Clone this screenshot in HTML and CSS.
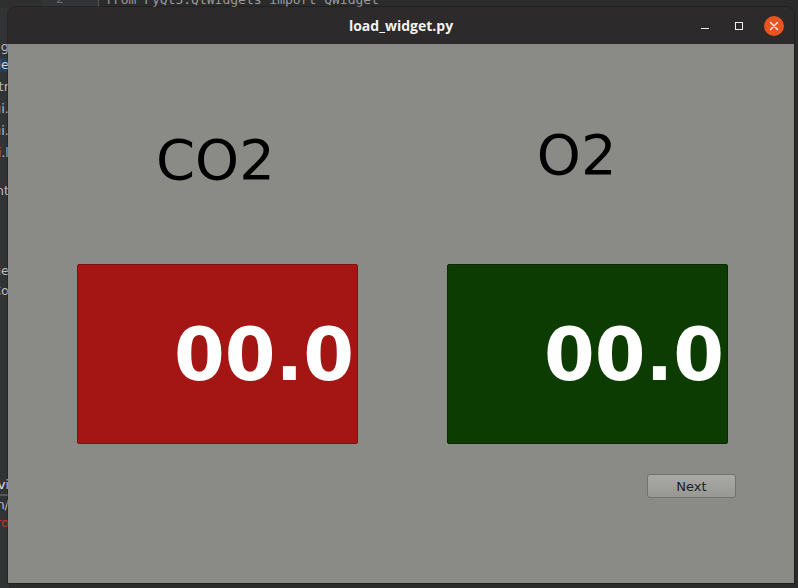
FILE: index.html
```html
<!DOCTYPE html>
<html>
<head>
<meta charset="utf-8">
<link rel="stylesheet" href="styles.css">
</head>
<body>
<div class="desk">
  <div class="codeline">
    <span class="gutter-a"></span>
    <span class="lineno">2</span>
    <span class="code">from PyQt5.QtWidgets import QWidget</span>
  </div>
  <div class="sidepanel">
    <div class="frag f1"><span>Debug</span></div>
    <div class="frag f2 hl"><span>loade</span></div>
    <div class="frag f3"><span>contr</span></div>
    <div class="frag f4"><span>ui.</span></div>
    <div class="frag f5"><span>ui.</span></div>
    <div class="frag f6"><span>ui.l</span></div>
    <div class="frag f7"><span>Paint</span></div>
    <div class="frag f8"><span>Wie</span></div>
    <div class="frag f9"><span>QCo</span></div>
    <div class="frag f10 white"><span>vi</span></div>
    <div class="frag f11"><span>n/</span></div>
    <div class="frag f12 red"><span>rro</span></div>
  </div>

  <div class="window">
    <div class="titlebar">
      <span class="title">load_widget.py</span>
      <div class="controls">
        <span class="ctl-min"></span>
        <span class="ctl-max"></span>
        <span class="ctl-close">
          <svg width="20" height="20" viewBox="0 0 20 20"><path d="M6.5 6.5 L13.5 13.5 M13.5 6.5 L6.5 13.5" stroke="#fff" stroke-width="1.3" stroke-linecap="round"/></svg>
        </span>
      </div>
    </div>
    <div class="content">
      <div class="labels">
        <div class="label label-co2">CO2</div>
        <div class="label label-o2">O2</div>
      </div>
      <div class="boxes">
        <div class="box box-red"><span class="value">00.0</span></div>
        <div class="box box-green"><span class="value">00.0</span></div>
      </div>
      <div class="actions">
        <button class="btn-next">Next</button>
      </div>
    </div>
  </div>
</div>
</body>
</html>
```

FILE: styles.css
```css
html, body {
  margin: 0;
  padding: 0;
}
body {
  width: 798px;
  height: 588px;
  overflow: hidden;
  background: #2b2b2b;
  font-family: "DejaVu Sans", sans-serif;
}
.desk {
  position: relative;
  width: 798px;
  height: 588px;
  background: #2b2b2b;
}
.codeline {
  display: flex;
  height: 8px;
  overflow: hidden;
  background: #2b2b2b;
  font-family: "DejaVu Sans Mono", monospace;
  font-size: 13px;
  color: #8e9092;
}
.gutter-a {
  width: 42px;
  background: #2f2f2f;
}
.lineno {
  width: 57px;
  padding-left: 14px;
  box-sizing: border-box;
  background: #313335;
  line-height: 1;
  margin-top: -8px;
  border-right: 1px solid #555;
  color: #6b6d70;
}
.code {
  padding-left: 6px;
  line-height: 1;
  margin-top: -7px;
  color: #9a9c9e;
  white-space: nowrap;
}
.sidepanel {
  width: 9px;
  height: 580px;
  background: #313335;
  position: relative;
  overflow: hidden;
  font-family: "DejaVu Sans", sans-serif;
  font-size: 13px;
  color: #b9bbbd;
}
.frag {
  display: flex;
  justify-content: flex-end;
  white-space: nowrap;
  height: 14px;
  line-height: 14px;
  overflow: hidden;
  width: 9px;
}
.frag span { flex: none; }
.f1 { margin-top: 32px; }
.f2 { margin-top: 4px; background: #214060; color: #d4d6d8; height: 14px; }
.f3 { margin-top: 8px; }
.f4 { margin-top: 8px; }
.f5 { margin-top: 8px; }
.f6 { margin-top: 8px; }
.f7 { margin-top: 24px; }
.f8 { margin-top: 66px; }
.f9 { margin-top: 6px; }
.f10 { margin-top: 180px; color: #e0e0e0; border-bottom: 2px solid #55585b; height: 16px; }
.f11 { margin-top: 2px; }
.f12 { margin-top: 4px; color: #c0392b; }

.window {
  position: absolute;
  left: 8px;
  top: 7px;
  width: 786px;
  height: 576px;
  display: flex;
  flex-direction: column;
  border-radius: 8px 8px 0 0;
  overflow: hidden;
  box-shadow: 0 0 0 1px rgba(0,0,0,0.25);
}
.titlebar {
  height: 37px;
  flex: none;
  background: #2c2a2a;
  position: relative;
  display: flex;
  align-items: center;
  justify-content: center;
}
.title {
  font-family: "Open Sans", sans-serif;
  font-weight: 700;
  font-size: 14px;
  color: #f2f2f2;
  margin-top: -1px;
}
.controls {
  position: absolute;
  right: 0;
  top: 0;
  height: 37px;
  display: flex;
  align-items: center;
}
.ctl-min {
  width: 8px;
  height: 1.5px;
  background: #f0f0f0;
  margin-top: 6px;
  margin-right: 26px;
}
.ctl-max {
  width: 6px;
  height: 6px;
  border: 1.5px solid #f0f0f0;
  margin-right: 21px;
  margin-top: 1px;
}
.ctl-close {
  width: 20px;
  height: 20px;
  border-radius: 50%;
  background: #e95420;
  margin-right: 10px;
  display: flex;
  margin-top: 1px;
}
.content {
  flex: 1;
  background: #8a8b86;
  display: flex;
  flex-direction: column;
}
.labels {
  display: flex;
  align-items: flex-start;
}
.label {
  font-family: "DejaVu Sans", sans-serif;
  font-size: 56px;
  line-height: 56px;
  color: #000;
}
.label-co2 {
  margin-top: 88px;
  margin-left: 148px;
}
.label-o2 {
  margin-top: 83px;
  margin-left: 262px;
}
.boxes {
  display: flex;
  margin-top: 76px;
  margin-left: 69px;
  gap: 89px;
}
.box {
  width: 281px;
  height: 180px;
  box-sizing: border-box;
  border-radius: 2px;
  display: flex;
  align-items: center;
  justify-content: flex-end;
  padding-right: 3px;
  overflow: hidden;
}
.box-red {
  background: #a31614;
  border: 1px solid #7c1210;
}
.box-green {
  background: #0d3c02;
  border: 1px solid #0a2a03;
}
.value {
  font-family: "DejaVu Sans", sans-serif;
  font-weight: 700;
  font-size: 73px;
  line-height: 73px;
  color: #fff;
  white-space: nowrap;
  flex: none;
}
.actions {
  display: flex;
  margin-top: 30px;
  padding-left: 639px;
}
.btn-next {
  width: 89px;
  height: 24px;
  box-sizing: border-box;
  border: 1px solid #72736f;
  border-radius: 3px;
  background: linear-gradient(#a9aaa6, #979894);
  font-family: "DejaVu Sans", sans-serif;
  font-size: 13px;
  color: #1c1c1c;
  padding: 0;
  margin: 0;
}
```
